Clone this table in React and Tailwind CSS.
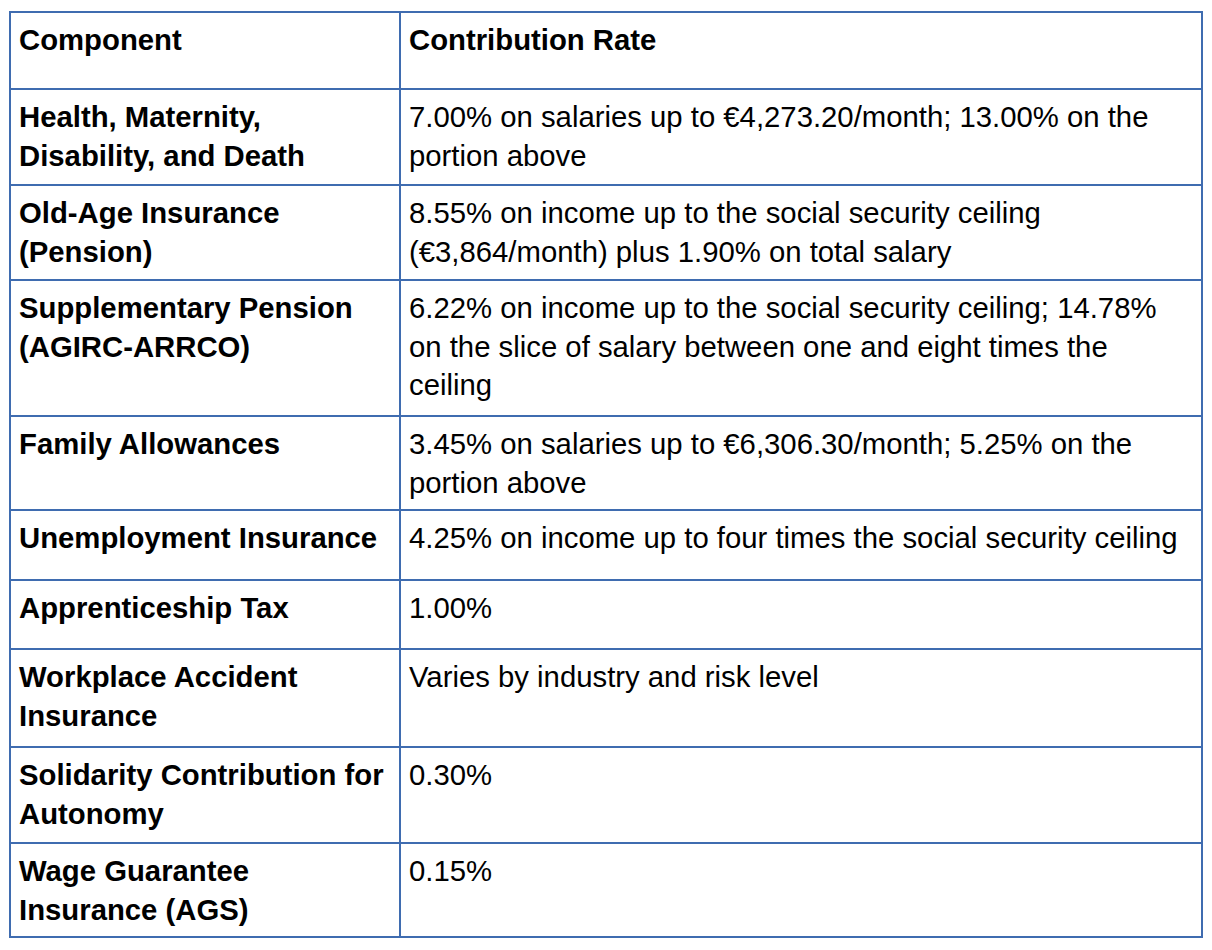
import React from "react";

const rows = [
  {
    name: "Health, Maternity, Disability, and Death",
    rate: "7.00% on salaries up to €4,273.20/month; 13.00% on the portion above",
    h: "h-[96px]",
  },
  {
    name: "Old-Age Insurance (Pension)",
    rate: "8.55% on income up to the social security ceiling (€3,864/month) plus 1.90% on total salary",
    h: "h-[95px]",
  },
  {
    name: "Supplementary Pension (AGIRC-ARRCO)",
    rate: "6.22% on income up to the social security ceiling; 14.78% on the slice of salary between one and eight times the ceiling",
    h: "h-[136px]",
  },
  {
    name: "Family Allowances",
    rate: "3.45% on salaries up to €6,306.30/month; 5.25% on the portion above",
    h: "h-[94px]",
  },
  {
    name: "Unemployment Insurance",
    rate: "4.25% on income up to four times the social security ceiling",
    h: "h-[70px]",
  },
  { name: "Apprenticeship Tax", rate: "1.00%", h: "h-[69px]" },
  {
    name: "Workplace Accident Insurance",
    rate: "Varies by industry and risk level",
    h: "h-[98px]",
  },
  {
    name: "Solidarity Contribution for Autonomy",
    rate: "0.30%",
    h: "h-[96px]",
  },
  { name: "Wage Guarantee Insurance (AGS)", rate: "0.15%", h: "h-[94px]" },
];

const cell =
  "border-2 border-[#3f6cb0] align-top px-2 pt-[8px] text-left";

const App = () => {
  return (
    <div className="min-h-screen bg-white pt-[11px] pl-[9px] font-['Liberation_Sans',Arial,sans-serif] text-[29.3px] leading-[38.5px] text-black">
      <table className="w-[1194px] border-collapse table-fixed">
        <colgroup>
          <col className="w-[390px]" />
          <col />
        </colgroup>
        <thead>
          <tr className="h-[77px]">
            <th className={`${cell} font-bold`}>Component</th>
            <th className={`${cell} font-bold`}>Contribution Rate</th>
          </tr>
        </thead>
        <tbody>
          {rows.map((row) => (
            <tr key={row.name} className={row.h}>
              <td className={`${cell} font-bold`}>{row.name}</td>
              <td className={cell}>{row.rate}</td>
            </tr>
          ))}
        </tbody>
      </table>
    </div>
  );
};

export default App;
